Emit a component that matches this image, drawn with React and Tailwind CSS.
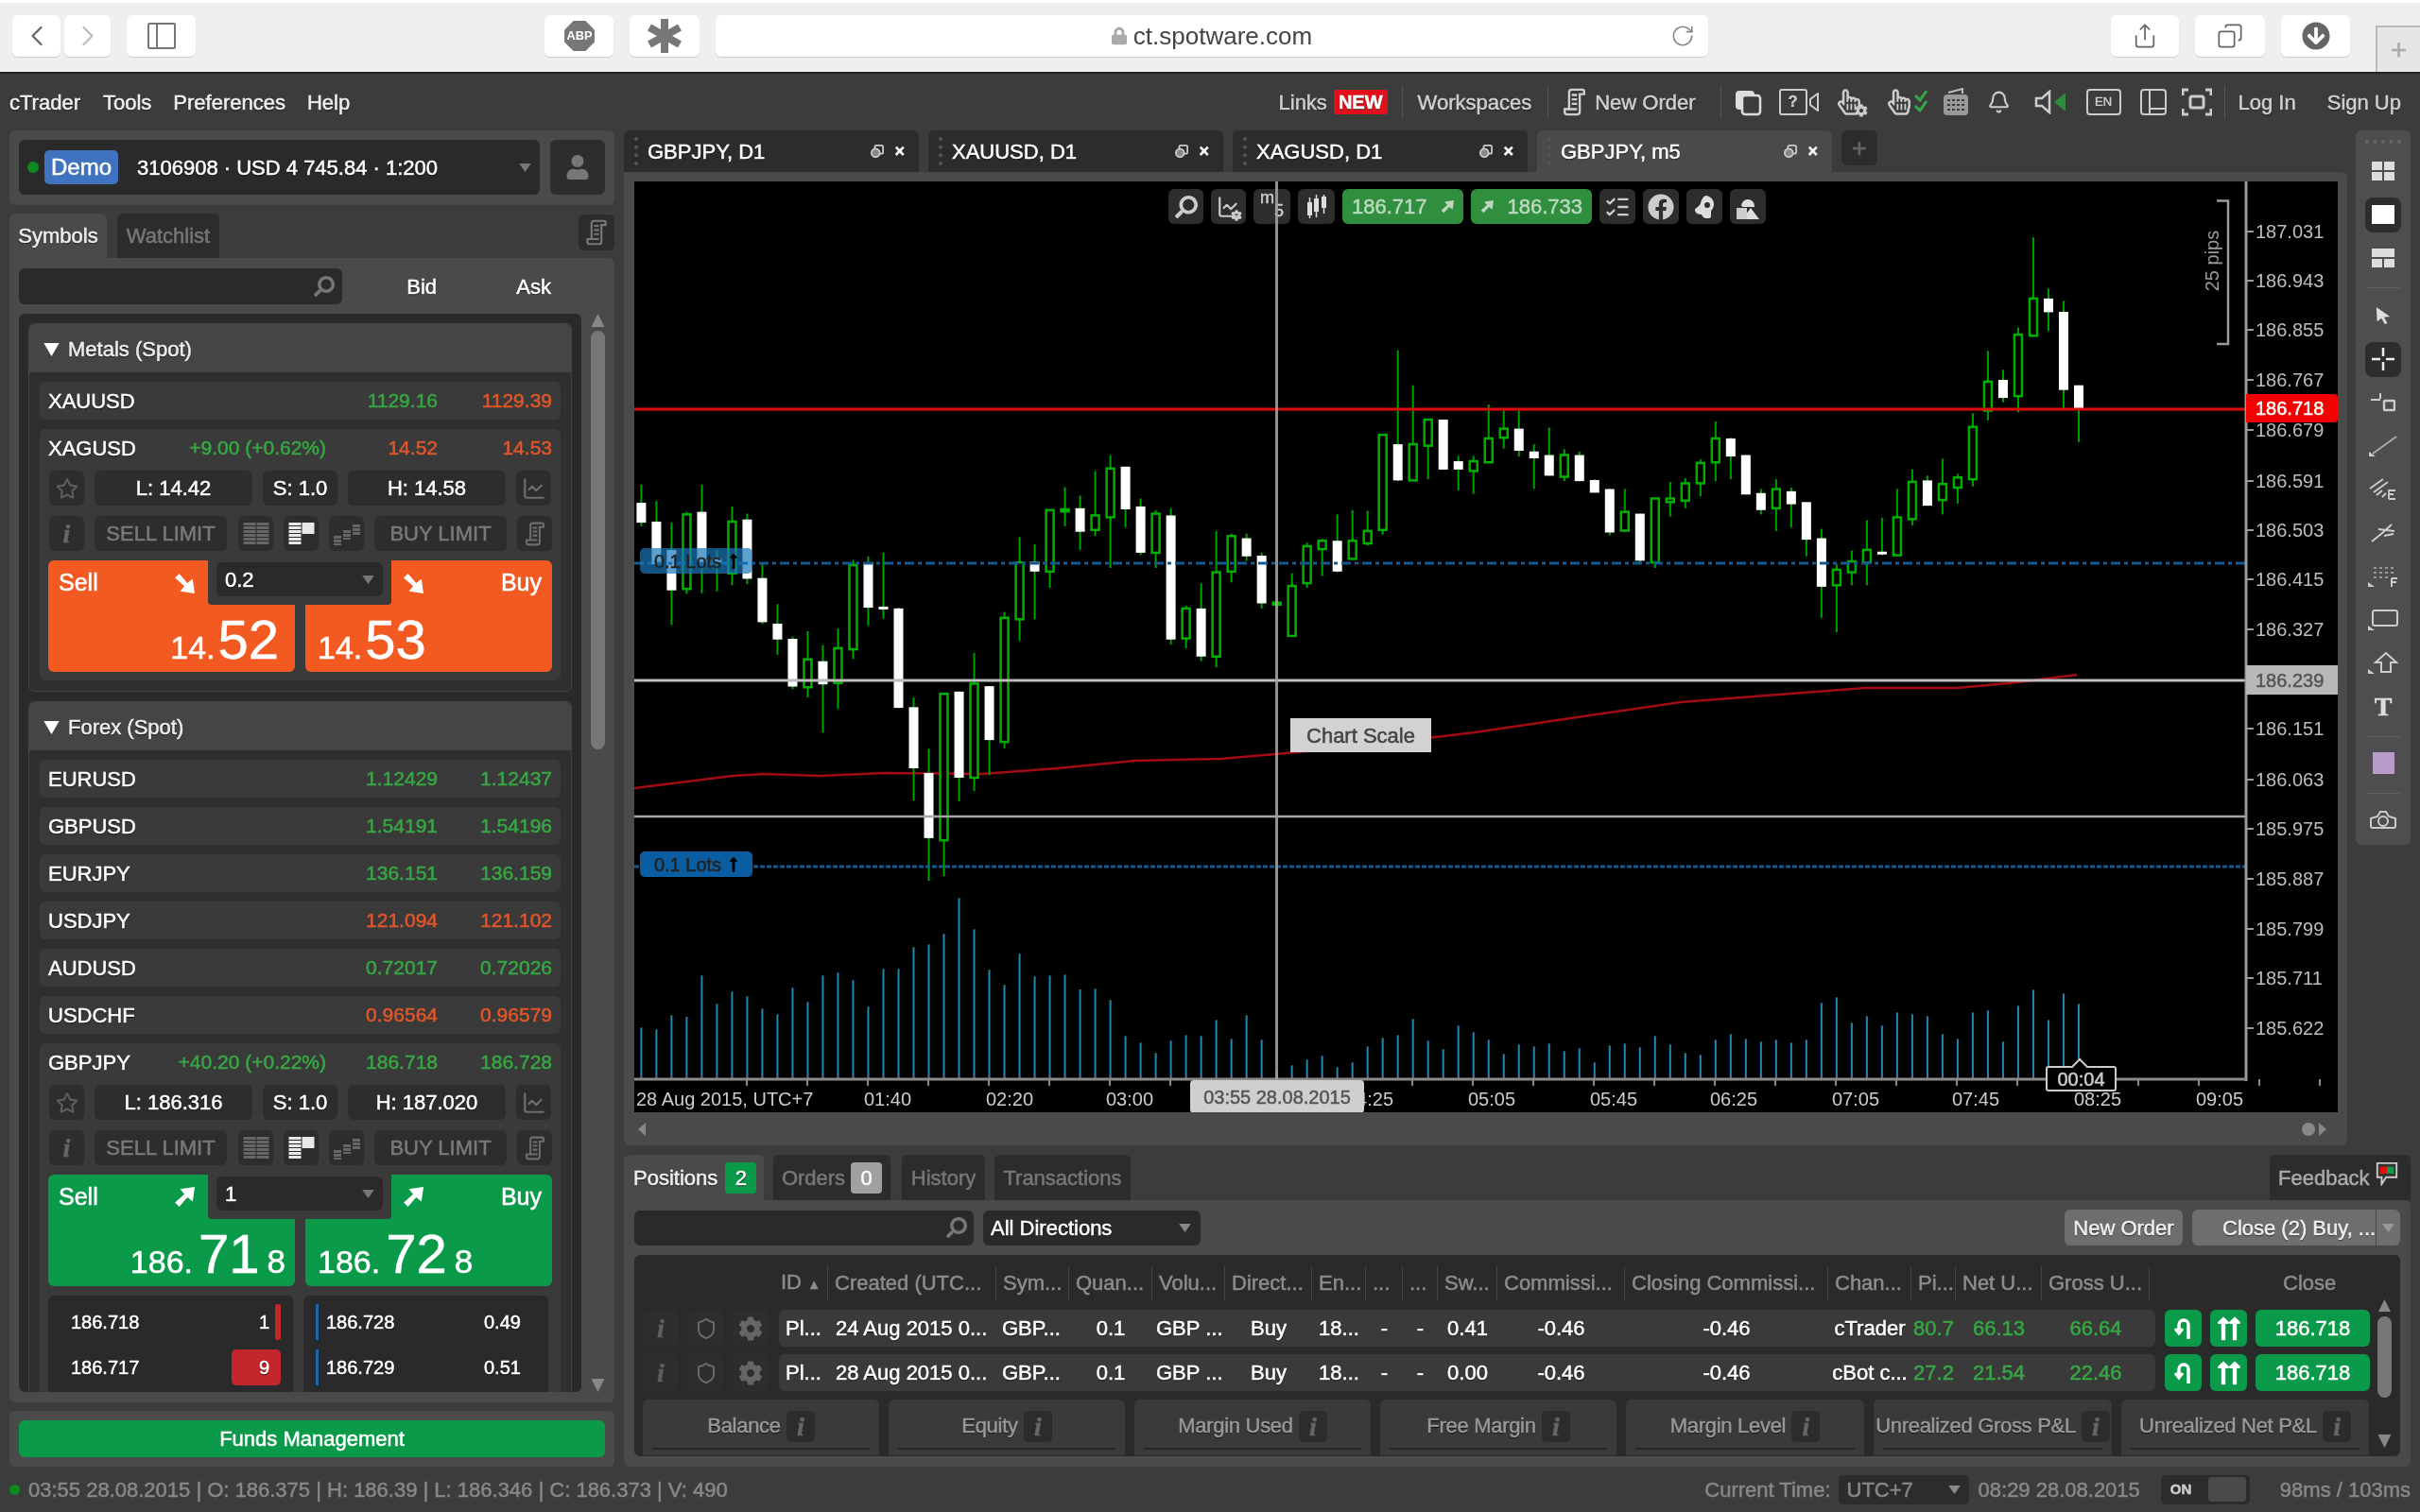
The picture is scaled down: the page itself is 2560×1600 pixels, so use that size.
import React from "react";
import {
  ChevronLeft, ChevronRight, RotateCw, Share, Copy, Bell, ListChecks, ChartLine, Shield,
} from "lucide-react";
import {
  FaLock, FaSearch, FaUser, FaArrowCircleDown, FaRegStar, FaCog,
  FaRegHandPointer, FaFacebook, FaLongArrowAltUp,
} from "react-icons/fa";

// [high, body top, body bottom, low, white?] read off the chart, in crop units
const CANDLES = [
  [870,920,975,985,1],[915,972,1090,1095,1],[975,1050,1162,1258,1],[945,952,1158,1172,0],[870,945,1090,1170,1],
  [1050,1075,1085,1165,1],[930,972,1115,1148,0],[950,966,1130,1145,1],[1088,1128,1250,1255,1],[1200,1254,1298,1340,1],
  [1290,1296,1428,1435,1],[1275,1353,1430,1458,0],[1313,1358,1422,1555,1],[1268,1322,1418,1490,0],[1078,1092,1325,1352,0],
  [1068,1085,1210,1260,1],[1058,1207,1214,1240,1],[1210,1212,1487,1487,1],[1458,1485,1654,1743,1],[1600,1667,1847,1965,1],
  [1448,1448,1853,1952,0],[1442,1442,1680,1745,1],[1335,1420,1680,1717,0],[1427,1427,1576,1672,1],[1222,1238,1581,1599,0],
  [1015,1085,1242,1302,0],[1035,1083,1110,1242,1],[940,940,1110,1155,0],[877,938,944,985,0],[900,935,1000,1050,1],
  [832,955,995,1012,0],[788,825,960,1100,0],[820,820,938,988,1],[908,930,1058,1065,1],[940,950,1058,1100,0],
  [935,955,1298,1312,1],[1205,1212,1295,1322,0],[1143,1212,1345,1358,1],[998,1112,1345,1375,0],[1005,1012,1110,1140,0],
  [1005,1018,1068,1080,1],[1058,1066,1198,1212,1],[1194,1196,1198,1200,0],[1115,1150,1288,1288,0],[1030,1040,1142,1155,0],
  [1020,1025,1048,1122,0],[952,1025,1110,1112,1],[940,1025,1075,1078,0],[942,998,1032,1038,0],[730,732,995,1008,0],
  [498,758,858,860,1],[595,758,858,860,0],[690,690,762,855,0],[690,690,828,828,1],[790,805,828,885,1],
  [790,805,832,895,0],[648,742,808,808,0],[665,715,740,770,0],[665,715,776,792,1],[758,778,797,882,1],
  [712,788,845,845,1],[772,788,848,860,0],[778,788,860,860,1],[855,857,892,892,1],[880,882,1002,1010,1],
  [882,945,997,1000,0],[950,950,1080,1085,1],[908,908,1085,1100,0],[862,908,918,958,0],[852,866,914,935,0],
  [800,810,866,902,0],[695,742,808,860,0],[740,742,792,855,1],[788,788,897,897,1],[882,893,940,952,1],
  [855,882,935,998,0],[878,888,924,988,1],[918,918,1022,1068,1],[992,1018,1152,1238,1],[1090,1105,1148,1278,0],
  [1052,1082,1112,1148,0],[968,1050,1085,1148,0],[962,1055,1062,1065,1],[882,960,1065,1065,0],[828,862,965,982,0],
  [845,858,928,928,1],[798,868,912,952,0],[840,850,878,922,0],[672,710,855,875,0],[500,585,665,692,0],
  [552,580,630,642,1],[435,455,625,670,0],[186,355,458,458,0],[328,355,393,445,1],[362,392,608,660,1],[595,595,660,752,1],
];

const VOLUMES = [
  922,928,883,888,757,847,808,823,862,880,796,841,757,748,772,856,736,736,667,658,625,511,610,739,787,688,760,757,754,801,
  799,835,949,970,1003,964,946,949,898,958,883,961,1060,1042,1024,1012,1048,1033,982,955,946,895,964,991,916,937,961,1006,
  976,982,973,997,988,1033,979,973,985,949,976,1003,1009,961,943,958,967,961,970,961,844,826,907,886,916,874,880,886,943,
  958,874,868,967,853,802,898,814,847,
];

const MA_LINE = "671,834 775,821 809,819 867,821 936,818 1039,819 1119,813 1200,805 1291,803 1349,798 1383,795 1518,780 1560,775 1675,758 1778,743 1881,735 1973,728 2071,728 2134,722 2197,714";
const PRICES = [
  ["187.031",245],["186.943",297],["186.855",349],["186.767",402],["186.679",455],["186.591",509],["186.503",561],["186.415",613],["186.327",666],
  ["186.151",771],["186.063",825],["185.975",877],["185.887",930],["185.799",983],["185.711",1035],["185.622",1088],
];
const TIMES = [["01:40",939],["02:20",1068],["03:00",1195],["04:25",1449],["05:05",1578],["05:45",1707],["06:25",1834],["07:05",1963],["07:45",2090],["08:25",2219],["09:05",2348]];
const FOREX = [
  ["EURUSD","1.12429","1.12437",true],["GBPUSD","1.54191","1.54196",true],["EURJPY","136.151","136.159",true],
  ["USDJPY","121.094","121.102",false],["AUDUSD","0.72017","0.72026",true],["USDCHF","0.96564","0.96579",false],
];

const sx = (i) => 678.4 + i * 16.006;
const sy = (v) => 180 + v / 2.613;

const shadow = "[text-shadow:0_1px_1px_#000]";
const box = "flex items-center justify-center rounded-[6px] bg-[#2d2d2d]";
const tableCols = "grid grid-cols-[52px_178px_77px_88px_77px_92px_57px_39px_37px_63px_135px_215px_88px_47px_91px_114px]";

function Caret({ className = "" }) {
  return (
    <svg viewBox="0 0 14 10" className={`h-[9px] w-[13px] ${className}`}>
      <polygon points="0,0 14,0 7,10" fill="currentColor" />
    </svg>
  );
}

function InfoMark({ className = "text-[#777]" }) {
  return <span className={`font-['Liberation_Serif',serif] text-[28px] font-bold italic leading-none ${className}`}>i</span>;
}

function DocIcon({ className = "h-[28px] w-[22px]" }) {
  return (
    <svg viewBox="0 0 24 32" fill="none" stroke="currentColor" strokeWidth="2.5" className={className}>
      <path d="M6 24V5a3 3 0 0 1 3-3h12a2 2 0 0 1 2 2v3h-5v20a3 3 0 0 1-3 3H4a3 3 0 0 1-3-3v-3h14" />
      <path d="M9 8h6M9 13h6M9 18h6" />
    </svg>
  );
}

function DiagArrow({ up, className = "h-[22px] w-[22px] text-white" }) {
  return (
    <svg viewBox="0 0 20 20" className={`${className} ${up ? "" : "rotate-90"}`}>
      <path d="M20 0 L18 14 L13 10 L5 19 L1 15 L10 7 L6 2 Z" fill="currentColor" />
    </svg>
  );
}

function PopOut() {
  return (
    <svg viewBox="0 0 16 16" fill="none" stroke="#ccc" strokeWidth="2" className="h-[14px] w-[14px]">
      <rect x="5" y="1" width="10" height="10" rx="2" />
      <circle cx="6" cy="10" r="5" fill="#888" />
    </svg>
  );
}

function ChartTab({ label, active }) {
  return (
    <div className={`flex h-[44px] w-[312px] items-center rounded-t-[6px] pl-[11px] ${active ? "bg-[#4a4a4a]" : "bg-[#2c2c2c]"}`}>
      <div className="h-[30px] w-[4px] border-l-[4px] border-dotted border-[#555]" />
      <span className={`ml-[10px] flex-1 text-[22px] text-white ${shadow}`}>{label}</span>
      <PopOut />
      <span className="ml-[11px] mr-[15px] text-[18px] font-bold leading-none text-white">×</span>
    </div>
  );
}

function Row({ symbol, bid, ask, up, askUp = up }) {
  return (
    <div className="flex h-[40px] items-center rounded-[6px] bg-[#3a3a3a] pl-[9px] pr-[9px]">
      <span className={`flex-1 text-[22px] text-white ${shadow}`}>{symbol}</span>
      <span className={`w-[118px] text-right text-[21px] ${up ? "text-[#36a843]" : "text-[#e2562a]"}`}>{bid}</span>
      <span className={`w-[121px] text-right text-[21px] ${askUp ? "text-[#36a843]" : "text-[#e2562a]"}`}>{ask}</span>
    </div>
  );
}

function TradeButton({ side, up, big }) {
  const bg = up ? "bg-[#0a9a49]" : "bg-[#f25a22]";
  const sell = side === "Sell";
  const [head, mid, tail] = big;
  return (
    <div className={`relative h-[118px] w-[261px] rounded-[6px] ${bg}`}>
      <div className={`flex h-[47px] items-center px-[11px] ${sell ? "justify-start" : "justify-between pl-[103px]"}`}>
        {sell ? <span className="text-[25px] text-white">Sell</span> : <DiagArrow up={up} />}
        {sell ? <span className="ml-[80px]"><DiagArrow up={up} /></span> : <span className="text-[25px] text-white">Buy</span>}
      </div>
      <div className={`absolute bottom-[5px] flex items-baseline text-white ${sell ? "right-[10px]" : "left-[13px]"}`}>
        <span className="text-[34px] leading-none">{head}</span>
        <span className={`text-[58px] leading-none ${tail ? "ml-[6px]" : "ml-[3px]"}`}>{mid}</span>
        {tail ? <span className="ml-[8px] text-[35px] leading-none">{tail}</span> : <span className="w-[7px]" />}
      </div>
    </div>
  );
}

function BookIcon({ kind }) {
  if (kind === "steps") {
    return (
      <svg viewBox="0 0 28 24" className="h-[24px] w-[28px]" stroke="#666" strokeWidth="8" strokeDasharray="3 1">
        <line x1="4" x2="4" y1="14" y2="24" />
        <line x1="14" x2="14" y1="8" y2="18" />
        <line x1="24" x2="24" y1="2" y2="14" />
      </svg>
    );
  }
  const c = kind === "mid" ? "#e8e8e8" : "#666";
  return (
    <svg viewBox="0 0 28 24" className="h-[24px] w-[28px]" stroke={c} strokeWidth="13" strokeDasharray="3 1">
      <line x1="7" x2="7" y1="0" y2="24" />
      <line x1="21" x2="21" y1="0" y2={kind === "mid" ? 12 : 24} strokeDasharray={kind === "mid" ? "none" : "3 1"} />
    </svg>
  );
}

function ExpandedRow({ symbol, change, bid, ask, up, low, high, qty, sellBig, buyBig, depth }) {
  const tone = up ? "text-[#36a843]" : "text-[#e2562a]";
  return (
    <div className={`rounded-[6px] bg-[#3a3a3a] pl-[9px] pr-[9px] ${depth ? "h-[420px]" : "h-[266px]"}`}>
      <div className="flex h-[40px] items-center">
        <span className={`flex-1 text-[22px] text-white ${shadow}`}>{symbol}</span>
        <span className="text-[21px] text-[#36a843]">{change}</span>
        <span className={`w-[118px] text-right text-[21px] ${tone}`}>{bid}</span>
        <span className={`w-[121px] text-right text-[21px] ${tone}`}>{ask}</span>
      </div>
      <div className={`ml-[1px] mt-[4px] flex h-[37px] gap-[11px] text-[22px] text-white ${shadow}`}>
        <div className={`${box} w-[37px] text-[#5e5e5e]`}><FaRegStar className="h-[24px] w-[24px]" /></div>
        <div className={`${box} w-[167px]`}>L: {low}</div>
        <div className={`${box} w-[79px]`}>S: 1.0</div>
        <div className={`${box} w-[167px]`}>H: {high}</div>
        <div className={`${box} w-[37px] text-[#6e6e6e]`}><ChartLine className="h-[26px] w-[26px]" /></div>
      </div>
      <div className="ml-[1px] mt-[11px] flex h-[37px] gap-[11px] text-[22px] text-[#7a7a7a]">
        <div className={`${box} w-[37px]`}><InfoMark className="text-[#666]" /></div>
        <div className={`${box} w-[140px]`}>SELL LIMIT</div>
        <div className={`${box} ml-[1px] w-[37px]`}><BookIcon kind="grid" /></div>
        <div className={`${box} w-[37px]`}><BookIcon kind="mid" /></div>
        <div className={`${box} w-[37px]`}><BookIcon kind="steps" /></div>
        <div className={`${box} w-[140px]`}>BUY LIMIT</div>
        <div className={`${box} w-[37px]`}><DocIcon className="h-[26px] w-[20px] text-[#6e6e6e]" /></div>
      </div>
      <div className="relative mt-[10px] flex gap-[11px]">
        <TradeButton side="Sell" up={up} big={sellBig} />
        <TradeButton side="Buy" up={up} big={buyBig} />
        <div className="absolute left-[169px] top-0 flex h-[47px] w-[194px] rounded-b-[4px] bg-[#3a3a3a] px-[9px] pt-[2px]">
          <div className="flex h-[36px] flex-1 items-center justify-between rounded-[6px] bg-[#2a2a2a] pl-[9px] pr-[9px]">
            <span className={`text-[22px] text-white ${shadow}`}>{qty}</span>
            <Caret className="text-[#777]" />
          </div>
        </div>
      </div>
      {depth && (
        <div className={`mt-[10px] flex gap-[11px] text-[20px] text-white ${shadow}`}>
          <div className="h-[220px] w-[259px] rounded-[6px] bg-[#2a2a2a] pr-[13px] pt-[4px]">
            <div className="flex h-[48px] items-center pl-[24px]">
              <span className="flex-1">186.718</span>
              <span>1</span>
              <div className="ml-[6px] h-[38px] w-[6px] rounded-[2px] bg-[#c3262c]" />
            </div>
            <div className="flex h-[48px] items-center pl-[24px]">
              <span className="flex-1">186.717</span>
              <div className="flex h-[38px] w-[52px] items-center justify-end rounded-[5px] bg-[#c3262c] pr-[12px]">9</div>
            </div>
          </div>
          <div className="h-[220px] w-[259px] rounded-[6px] bg-[#2a2a2a] pl-[13px] pt-[4px]">
            <div className="flex h-[48px] items-center">
              <div className="h-[38px] w-[3px] bg-[#1a66b0]" />
              <span className="ml-[8px] flex-1">186.728</span>
              <span className="w-[68px]">0.49</span>
            </div>
            <div className="flex h-[48px] items-center">
              <div className="h-[38px] w-[3px] bg-[#1a66b0]" />
              <span className="ml-[8px] flex-1">186.729</span>
              <span className="w-[68px]">0.51</span>
            </div>
          </div>
        </div>
      )}
    </div>
  );
}

function Group({ title, children }) {
  return (
    <div className="rounded-[6px] border border-[#444] bg-[#2f2f2f]">
      <div className="flex h-[51px] items-center rounded-t-[6px] bg-[#454545] pl-[15px] pt-[2px]">
        <svg viewBox="0 0 14 12" className="h-[14px] w-[17px]"><polygon points="0,0 14,0 7,12" fill="#fff" /></svg>
        <span className={`ml-[9px] text-[22px] text-[#eee] ${shadow}`}>{title}</span>
      </div>
      <div className="flex flex-col gap-[10px] px-[11px] pb-[11px] pt-[10px]">{children}</div>
    </div>
  );
}

function ChartArea() {
  return (
    <svg viewBox="671 192 1802 985" width="1802" height="985" className="block">
      {VOLUMES.map((v, i) => (
        <line key={i} x1={sx(i)} x2={sx(i)} y1={780 + v / 3} y2={1141} stroke="#2a85b0" strokeWidth="2" />
      ))}
      <polyline points={MA_LINE} fill="none" stroke="#a30a14" strokeWidth="2.5" />
      {CANDLES.map(([hi, top, bot, lo, white], i) => {
        const x = sx(i);
        return (
          <g key={i}>
            <line x1={x} x2={x} y1={sy(hi)} y2={sy(lo)} stroke="#00a000" strokeWidth="2" />
            {white ? (
              <rect x={x - 5} y={sy(top)} width="10" height={Math.max(sy(bot) - sy(top), 3)} fill="#fff" />
            ) : (
              <rect x={x - 4} y={sy(top)} width="8" height={Math.max(sy(bot) - sy(top), 2)} fill="#000" stroke="#00b000" strokeWidth="2.5" />
            )}
          </g>
        );
      })}
      <line x1="671" x2="2376" y1="433" y2="433" stroke="#e00d0d" strokeWidth="3" />
      <line x1="671" x2="2376" y1="720" y2="720" stroke="#bdbdbd" strokeWidth="3" />
      <line x1="671" x2="2376" y1="864" y2="864" stroke="#a8a8a8" strokeWidth="2.5" />
      <line x1="671" x2="2376" y1="596" y2="596" stroke="#14588f" strokeWidth="3" strokeDasharray="10 4 4 4" />
      <line x1="671" x2="2376" y1="917" y2="917" stroke="#14588f" strokeWidth="3" strokeDasharray="5 2" />

      <line x1="2376" x2="2376" y1="192" y2="1144" stroke="#9a9a9a" strokeWidth="3" />
      <line x1="671" x2="2376" y1="1142" y2="1142" stroke="#8a8a8a" strokeWidth="3" />
      {PRICES.map(([p, y]) => (
        <g key={p}>
          <line x1="2376" x2="2384" y1={y} y2={y} stroke="#9a9a9a" strokeWidth="2" />
          <text x="2386" y={y + 7} fontSize="20" fill="#bdbdbd">{p}</text>
        </g>
      ))}
      {Array.from({ length: 27 }, (_, i) => (
        <line key={i} x1={790 + i * 64} x2={790 + i * 64} y1="1142" y2="1149" stroke="#8a8a8a" strokeWidth="2" />
      ))}
      <text x="673" y="1170" fontSize="20" fill="#ccc">28 Aug 2015, UTC+7</text>
      {TIMES.map(([t, x]) => (
        <text key={t} x={x} y="1170" fontSize="20" fill="#ccc" textAnchor="middle">{t}</text>
      ))}
      <path d="M2345 212.5h12v151.5h-12" fill="none" stroke="#9a9a9a" strokeWidth="2.5" />
      <text x="2354" y="283" fontSize="20" fill="#9a9a9a" textAnchor="middle" transform="rotate(-90 2347 283)">25 pips</text>
    </svg>
  );
}

function Hand({ extra }) {
  return (
    <div className="relative flex w-full items-center text-[#ccc]">
      <FaRegHandPointer className="h-[28px] w-[24px]" />
      {extra}
    </div>
  );
}

function MenuIcons() {
  return (
    <>
      <div className="ml-[14px] h-[30px] w-[29px] text-[#ddd]">
        <svg viewBox="0 0 29 30" fill="none" className="h-full w-full">
          <rect x="1" y="3" width="20" height="20" rx="4" fill="#ddd" />
          <rect x="8" y="8" width="19" height="20" rx="3" fill="#3c3c3c" stroke="#ddd" strokeWidth="2.5" />
        </svg>
      </div>
      <div className="ml-[18px] flex h-[30px] w-[42px] items-center text-[#ccc]">
        <div className="flex h-[28px] w-[30px] items-center justify-center rounded-[3px] border-2 border-[#ccc] text-[16px] font-bold leading-none">?</div>
        <svg viewBox="0 0 10 20" className="ml-[2px] h-[20px] w-[10px]"><path d="M9 1 1 7v6l8 6Z" fill="none" stroke="#ccc" strokeWidth="2" /></svg>
      </div>
      <div className="ml-[20px] w-[30px]">
        <Hand extra={<FaCog className="absolute -bottom-[2px] right-[-2px] h-[14px] w-[14px] text-[#ccc]" />} />
      </div>
      <div className="ml-[23px] w-[45px]">
        <Hand extra={
          <svg viewBox="0 0 16 26" fill="none" stroke="#36a843" strokeWidth="3" className="ml-[3px] h-[26px] w-[16px]">
            <path d="M2 6l5 5 7-10M2 17l5 5 7-10" />
          </svg>
        } />
      </div>
      <div className="ml-[12px] h-[30px] w-[30px]">
        <svg viewBox="0 0 30 30" className="h-full w-full">
          <path d="M7 5 22 1v5" fill="none" stroke="#bbb" strokeWidth="2" />
          <rect x="2" y="7" width="26" height="22" rx="4" fill="#999" />
          <path d="M6 13h18M6 18h18M6 23h18" stroke="#3c3c3c" strokeWidth="2" strokeDasharray="3 2" />
        </svg>
      </div>
      <Bell className="ml-[18px] h-[30px] w-[25px] text-[#ccc]" strokeWidth={2} />
      <div className="ml-[25px] h-[26px] w-[35px]">
        <svg viewBox="0 0 35 26" className="h-full w-full">
          <path d="M2 9h6l8-7v22l-8-7H2Z" fill="none" stroke="#ccc" strokeWidth="2.5" />
          <path d="M33 3v20L21 13Z" fill="#2f8a3c" />
        </svg>
      </div>
      <div className="ml-[20px] flex h-[28px] w-[37px] items-center justify-center rounded-[4px] border-2 border-[#ccc] text-[13px] text-[#ccc]">EN</div>
      <div className="ml-[20px] flex h-[28px] w-[28px] rounded-[4px] border-2 border-[#ccc]">
        <div className="w-[9px] border-r-2 border-[#ccc]" />
        <div className="mt-auto h-[6px] flex-1 border-t-2 border-[#ccc]" />
      </div>
      <div className="ml-[16px] h-[30px] w-[32px]">
        <svg viewBox="0 0 32 30" fill="none" stroke="#ccc" strokeWidth="3" className="h-full w-full">
          <path d="M1 8V2h6M25 2h6v6M31 22v6h-6M7 28H1v-6" />
          <rect x="9" y="9" width="14" height="12" rx="2" />
        </svg>
      </div>
    </>
  );
}

function ToolIcon({ kind }) {
  const st = { fill: "none", stroke: "#ccc", strokeWidth: 2 };
  if (kind === "grid4") return <svg viewBox="0 0 24 20" className="h-[20px] w-[24px]"><path d="M0 0h11v9H0zM13 0h11v9H13zM0 11h11v9H0zM13 11h11v9H13z" fill="#ddd" /></svg>;
  if (kind === "one") return <div className={`${box} h-[37px] w-[38px] rounded-[8px]`}><div className="h-[20px] w-[24px] bg-white" /></div>;
  if (kind === "grid2") return <svg viewBox="0 0 24 20" className="h-[20px] w-[24px]"><path d="M0 0h24v9H0zM0 11h11v9H0zM13 11h11v9H13z" fill="#ddd" /></svg>;
  if (kind === "cursor") return <svg viewBox="0 0 20 22" className="h-[22px] w-[18px]"><path d="M2 1l16 11-7 1 4 7-3 1-4-7-5 4Z" fill="#ddd" /></svg>;
  if (kind === "cross") return <div className={`${box} h-[37px] w-[38px] rounded-[8px]`}><svg viewBox="0 0 24 24" className="h-[24px] w-[24px]"><path d="M0 12h9M15 12h9M12 0v9M12 15v9" stroke="#eee" strokeWidth="2.5" /></svg></div>;
  if (kind === "hline") return <svg viewBox="0 0 26 22" className="h-[22px] w-[26px]" {...st}><path d="M0 8h10M10 1v6" /><rect x="14" y="9" width="11" height="10" rx="1" strokeWidth="2.5" /></svg>;
  if (kind === "trend") return <svg viewBox="0 0 30 22" className="h-[22px] w-[30px]"><path d="M4 19 29 1" stroke="#aaa" strokeWidth="2" /><path d="M0 17l7 5H0Z" fill="#ccc" /></svg>;
  if (kind === "fib") return <svg viewBox="0 0 30 24" className="h-[24px] w-[30px]" {...st}><path d="M1 11 15 1M5 15 20 4M8 18l6-5M14 20l4-4" /><path d="M21 22v-9h7M21 17h5M21 22h7" strokeWidth="1.8" /></svg>;
  if (kind === "fork") return <svg viewBox="0 0 26 20" className="h-[20px] w-[26px]" {...st}><path d="M1 19 11 11M11 11 22 1M8 6 25 8M14 13l10-2" /></svg>;
  if (kind === "dots") return <svg viewBox="0 0 32 24" className="h-[24px] w-[32px]"><path d="M6 3h24M6 8h24M6 13h16" stroke="#999" strokeWidth="2" strokeDasharray="3 3" /><path d="M0 18l7 5H0Z" fill="#ccc" /><path d="M25 14h6M25 14v9M25 18h5" stroke="#ccc" strokeWidth="2" fill="none" /></svg>;
  if (kind === "rect") return <svg viewBox="0 0 32 24" className="h-[24px] w-[32px]"><rect x="5" y="2" width="26" height="16" rx="2" fill="none" stroke="#ccc" strokeWidth="2" /><path d="M0 18l7 5H0Z" fill="#ccc" /></svg>;
  if (kind === "arrow") return <svg viewBox="0 0 32 24" className="h-[24px] w-[32px]"><path d="M19 1 30 11h-6v10H14V11H8Z" fill="none" stroke="#ccc" strokeWidth="2" /><path d="M0 18l7 5H0Z" fill="#ccc" /></svg>;
  if (kind === "text") return <span className="font-['Liberation_Serif',serif] text-[28px] font-bold leading-none text-[#ddd]">T</span>;
  if (kind === "swatch") return <div className="h-[23px] w-[23px] bg-[#b79ccb]" />;
  return <svg viewBox="0 0 28 20" className="h-[20px] w-[28px]" {...st}><path d="M1 17V9l7-2 3-5h6l3 5 7 2v8a2 2 0 0 1-2 2H3a2 2 0 0 1-2-2Z" /><circle cx="14" cy="12" r="5" /></svg>;
}

function RightToolbar() {
  const tool = (k) => (
    <div key={k} className="flex h-[46px] items-center justify-center"><ToolIcon kind={k} /></div>
  );
  const sep = "mx-auto h-[1px] w-[36px] bg-[#606060]";
  return (
    <div className="ml-[9px] h-[756px] w-[58px] rounded-[6px] bg-[#4e4e4e]">
      <div className="mx-auto mt-[10px] h-[5px] w-[38px] border-t-[4px] border-dotted border-[#666]" />
      <div className="mt-[5px]">{["grid4", "one", "grid2"].map(tool)}</div>
      <div className={`mt-[8px] ${sep}`} />
      <div className="mt-[6px]">
        {["cursor", "cross", "hline", "trend", "fib", "fork", "dots", "rect", "arrow", "text"].map(tool)}
      </div>
      <div className={`mt-[8px] ${sep}`} />
      <div className="mt-[4px]">{tool("swatch")}</div>
      <div className={`mt-[9px] ${sep}`} />
      <div className="mt-[4px]">{tool("camera")}</div>
    </div>
  );
}

function Summary({ label, w = "w-[250px]" }) {
  return (
    <div className={`relative flex h-[59px] ${w} justify-center gap-[6px] overflow-hidden rounded-t-[6px] bg-[#3a3a3a] pt-[12px] text-[22px] tracking-[-0.3px] text-[#999]`}>
      <span className={`shrink-0 whitespace-nowrap leading-[31px] ${shadow}`}>{label}</span>
      <span className="flex h-[33px] w-[30px] shrink-0 items-center justify-center rounded-[5px] bg-[#2c2c2c]"><InfoMark className="text-[#666]" /></span>
      <div className="absolute bottom-[6px] left-[10px] right-[10px] h-[2px] bg-[#262626]" />
    </div>
  );
}

function PositionRow({ created, channel, pips, net, gross, swap }) {
  return (
    <div className="flex h-[39px] items-center">
      <div className={`${box} h-full w-[38px]`}><InfoMark className="text-[#5e5e5e]" /></div>
      <div className={`${box} ml-[10px] h-full w-[38px]`}><Shield className="h-[28px] w-[24px] text-[#6a6a6a]" /></div>
      <div className={`${box} ml-[9px] h-full w-[38px]`}><FaCog className="h-[26px] w-[26px] text-[#666]" /></div>
      <div className={`${tableCols} ml-[11px] h-full w-[1456px] items-center rounded-[6px] bg-[#3a3a3a] text-center text-[22px] text-white ${shadow}`}>
        <span className="pl-[7px] text-left">Pl...</span>
        <span className="whitespace-nowrap pl-[8px] text-left">{created}</span>
        <span className="pl-[6px] text-left">GBP...</span>
        <span>0.1</span>
        <span className="whitespace-nowrap pl-[4px] text-left">GBP ...</span>
        <span>Buy</span>
        <span>18...</span>
        <span>-</span>
        <span>-</span>
        <span>{swap}</span>
        <span>-0.46</span>
        <span>-0.46</span>
        <span className="whitespace-nowrap">{channel}</span>
        <span className="text-[#36a843] [text-shadow:none]">{pips}</span>
        <span className="text-[#36a843] [text-shadow:none]">{net}</span>
        <span className="text-[#36a843] [text-shadow:none]">{gross}</span>
      </div>
      <div className="ml-[10px] flex h-full w-[39px] items-center justify-center rounded-[6px] bg-[#0a9a49]">
        <svg viewBox="0 0 20 26" fill="none" stroke="#fff" strokeWidth="3.5" className="h-[26px] w-[20px]">
          <path d="M15 24V9a5 5 0 0 0-10 0v6" />
          <path d="M1 13l4 5 4-5" strokeWidth="3" />
        </svg>
      </div>
      <div className="ml-[9px] flex h-full w-[39px] items-center justify-center gap-[2px] rounded-[6px] bg-[#0a9a49] text-white">
        <FaLongArrowAltUp className="-mx-[2px] h-[28px] w-[14px]" /><FaLongArrowAltUp className="-mx-[2px] h-[28px] w-[14px]" />
      </div>
      <div className="ml-[9px] flex h-full w-[121px] items-center justify-center rounded-[6px] bg-[#0a9a49] text-[22px] text-white">186.718</div>
    </div>
  );
}

export default function App() {
  return (
    <div className="flex h-[1600px] w-[2560px] flex-col overflow-hidden bg-[#3c3c3c] font-['Liberation_Sans',Arial,sans-serif] blur-[0.7px] [-webkit-text-stroke:0.5px]">
      {/* browser chrome */}
      <div className="flex h-[78px] shrink-0 items-start border-b-[2px] border-t-[3px] border-b-[#222] border-t-white bg-[#efefef] pl-[13px] pt-[13px] text-[#666]">
        <div className="flex h-[44px] w-[51px] items-center justify-center rounded-[6px] bg-white shadow-[0_1px_1px_#ccc]"><ChevronLeft className="h-[36px] w-[36px]" strokeWidth={1.5} /></div>
        <div className="ml-[4px] flex h-[44px] w-[49px] items-center justify-center rounded-[6px] bg-white text-[#bbb] shadow-[0_1px_1px_#ccc]"><ChevronRight className="h-[36px] w-[36px]" strokeWidth={1.5} /></div>
        <div className="ml-[17px] flex h-[44px] w-[73px] items-center justify-center rounded-[6px] bg-white shadow-[0_1px_1px_#ccc]">
          <div className="flex h-[28px] w-[30px] rounded-[2px] border-2 border-[#777]">
            <div className="w-[9px] border-r-2 border-[#777]" />
          </div>
        </div>
        <div className="ml-[369px] flex h-[44px] w-[73px] items-center justify-center rounded-[6px] bg-white shadow-[0_1px_1px_#ccc]">
          <svg viewBox="0 0 32 32" className="h-[34px] w-[34px]">
            <polygon points="10,1 22,1 31,10 31,22 22,31 10,31 1,22 1,10" fill="#777" />
            <text x="16" y="20" fontSize="12" fontWeight="bold" fill="#fff" textAnchor="middle">ABP</text>
          </svg>
        </div>
        <div className="ml-[17px] flex h-[44px] w-[74px] items-center justify-center rounded-[6px] bg-white shadow-[0_1px_1px_#ccc]">
          <svg viewBox="0 0 36 36" className="h-[36px] w-[36px]" stroke="#777" strokeWidth="8">
            <path d="M18 0v36M2 9l32 18M34 9 2 27" />
          </svg>
        </div>
        <div className="relative ml-[17px] flex h-[44px] w-[1050px] items-center justify-center rounded-[6px] bg-white shadow-[0_1px_1px_#ccc]">
          <FaLock className="h-[20px] w-[16px] text-[#aaa]" />
          <span className="ml-[7px] text-[26px] text-[#444] [-webkit-text-stroke:0]">ct.spotware.com</span>
          <RotateCw className="absolute right-[14px] h-[26px] w-[26px] text-[#888]" strokeWidth={1.5} />
        </div>
        <div className="ml-[426px] flex h-[44px] w-[72px] items-center justify-center rounded-[6px] bg-white shadow-[0_1px_1px_#ccc]"><Share className="h-[32px] w-[28px]" strokeWidth={1.5} /></div>
        <div className="ml-[17px] flex h-[44px] w-[74px] items-center justify-center rounded-[6px] bg-white shadow-[0_1px_1px_#ccc]"><Copy className="h-[28px] w-[28px] -scale-x-100" strokeWidth={1.5} /></div>
        <div className="ml-[17px] flex h-[44px] w-[73px] items-center justify-center rounded-[6px] bg-white shadow-[0_1px_1px_#ccc]"><FaArrowCircleDown className="h-[30px] w-[30px]" /></div>
        <div className="ml-[27px] flex h-[49px] w-[47px] items-center justify-center self-end border-l-2 border-t-2 border-[#bbb] bg-[#e6e6e6] text-[30px] font-light text-[#aaa]">+</div>
      </div>

      {/* app menu */}
      <div className={`flex h-[60px] shrink-0 items-center pl-[10px] pr-[20px] text-[22px] text-[#f0f0f0] ${shadow}`}>
        <span>cTrader</span>
        <span className="ml-[24px]">Tools</span>
        <span className="ml-[23px]">Preferences</span>
        <span className="ml-[23px]">Help</span>
        <div className="ml-auto flex items-center text-[#d0d0d0]">
          <span>Links</span>
          <span className="ml-[7px] rounded-[3px] bg-[#e0101a] px-[5px] text-[20px] font-bold leading-[26px] text-white">NEW</span>
          <div className="ml-[15px] h-[36px] w-[1px] bg-[#555]" />
          <span className="ml-[16px]">Workspaces</span>
          <div className="ml-[17px] h-[36px] w-[1px] bg-[#555]" />
          <DocIcon className="ml-[14px] h-[30px] w-[27px]" />
          <span className="ml-[8px]">New Order</span>
          <div className="ml-[26px] h-[36px] w-[1px] bg-[#555]" />
          <MenuIcons />
          <div className="ml-[13px] h-[36px] w-[1px] bg-[#555]" />
          <span className="ml-[14px]">Log In</span>
          <span className="ml-[33px]">Sign Up</span>
        </div>
      </div>

      <div className="flex h-[1414px] shrink-0">
        {/* left column */}
        <div className="flex w-[660px] shrink-0 flex-col pl-[10px] pr-[10px]">
          <div className="flex h-[79px] gap-[11px] rounded-[6px] bg-[#4a4a4a] p-[10px]">
            <div className="flex h-[58px] flex-1 items-center rounded-[6px] bg-[#2a2a2a] pl-[9px] pr-[9px]">
              <div className="h-[12px] w-[12px] rounded-full bg-[#0d8a1f]" />
              <span className="ml-[6px] rounded-[5px] bg-[#3f72bf] px-[7px] text-[24px] leading-[36px] text-white">Demo</span>
              <span className={`ml-[20px] flex-1 text-[22px] text-white ${shadow}`}>3106908 · USD 4 745.84 · 1:200</span>
              <Caret className="text-[#777]" />
            </div>
            <div className={`${box} h-[58px] w-[58px] text-[#777]`}><FaUser className="h-[26px] w-[26px]" /></div>
          </div>

          <div className="mt-[9px] flex h-[47px] items-end">
            <div className={`flex h-[47px] w-[103px] items-center justify-center rounded-t-[6px] bg-[#4a4a4a] text-[22px] text-[#eee] ${shadow}`}>Symbols</div>
            <div className="ml-[11px] flex h-[47px] w-[108px] items-center justify-center rounded-t-[6px] bg-[#2c2c2c] text-[22px] text-[#777]">Watchlist</div>
            <div className="mb-[8px] ml-auto flex h-[38px] w-[38px] items-center justify-center rounded-[6px] bg-[#2c2c2c] text-[#777]"><DocIcon className="h-[28px] w-[22px]" /></div>
          </div>

          <div className="flex h-[1211px] flex-col rounded-b-[6px] rounded-tr-[6px] bg-[#4a4a4a] px-[10px] pt-[11px]">
            <div className={`flex h-[38px] items-center text-[22px] text-white ${shadow}`}>
              <div className="flex h-full w-[342px] items-center justify-end rounded-[6px] bg-[#2a2a2a] pr-[8px] text-[#777]"><FaSearch className="h-[22px] w-[22px] -scale-x-100" /></div>
              <span className="w-[100px] text-right">Bid</span>
              <span className="w-[121px] text-right">Ask</span>
            </div>
            <div className="mt-[10px] flex h-[1141px] gap-[10px]">
              <div className="h-full w-[595px] overflow-hidden rounded-[6px] bg-[#2a2a2a] px-[10px] pt-[10px]">
                <Group title="Metals (Spot)">
                  <Row symbol="XAUUSD" bid="1129.16" ask="1129.39" up askUp={false} />
                  <ExpandedRow symbol="XAGUSD" change="+9.00 (+0.62%)" bid="14.52" ask="14.53" low="14.42" high="14.58" qty="0.2" sellBig={["14.", "52"]} buyBig={["14.", "53"]} />
                </Group>
                <div className="h-[10px]" />
                <Group title="Forex (Spot)">
                  {FOREX.map(([s, b, a, u]) => <Row key={s} symbol={s} bid={b} ask={a} up={u} />)}
                  <ExpandedRow symbol="GBPJPY" change="+40.20 (+0.22%)" bid="186.718" ask="186.728" up low="186.316" high="187.020" qty="1" sellBig={["186.", "71", "8"]} buyBig={["186.", "72", "8"]} depth />
                </Group>
              </div>
              <div className="flex h-full w-[15px] flex-col items-center">
                <svg viewBox="0 0 14 14" className="h-[14px] w-[15px]"><polygon points="7,0 14,14 0,14" fill="#888" /></svg>
                <div className="mt-[4px] h-[443px] w-[15px] rounded-full bg-[#777]" />
                <svg viewBox="0 0 14 14" className="mt-auto h-[14px] w-[15px]"><polygon points="0,0 14,0 7,14" fill="#888" /></svg>
              </div>
            </div>
          </div>

          <div className="mt-[9px] h-[59px] rounded-[6px] bg-[#4a4a4a] p-[10px]">
            <div className="flex h-[39px] items-center justify-center rounded-[6px] bg-[#0a9a49] text-[22px] text-white">Funds Management</div>
          </div>
        </div>

        {/* centre and right */}
        <div className="flex flex-1 flex-col">
          <div className="flex">
            <div className="w-[1823px]">
              <div className="flex h-[44px] items-start gap-[10px]">
                <ChartTab label="GBPJPY, D1" />
                <ChartTab label="XAUUSD, D1" />
                <ChartTab label="XAGUSD, D1" />
                <ChartTab label="GBPJPY, m5" active />
                <div className="flex h-[37px] w-[38px] items-center justify-center rounded-[6px] bg-[#2c2c2c] text-[28px] leading-none text-[#666]">+</div>
              </div>
              <div className="h-[1030px] rounded-b-[6px] rounded-tr-[6px] bg-[#4a4a4a] pl-[11px] pt-[10px]">
                <div className="relative h-[985px] w-[1802px] overflow-hidden bg-black">
                  <ChartArea />
                  <div className="absolute left-[565px] top-[8px] flex gap-[8px] text-[#ccc]">
                    <div className={`${box} h-[37px] w-[37px]`}><FaSearch className="h-[24px] w-[24px] -scale-x-100" /></div>
                    <div className={`${box} relative h-[37px] w-[37px]`}>
                      <ChartLine className="h-[26px] w-[26px]" />
                      <FaCog className="absolute bottom-[3px] right-[4px] h-[12px] w-[12px]" />
                    </div>
                    <div className={`${box} h-[37px] w-[39px] items-start text-[18px] leading-none`}>m<span className="mt-[14px]">5</span></div>
                    <div className={`${box} h-[37px] w-[39px]`}>
                      <svg viewBox="0 0 26 26" className="h-[26px] w-[26px]"><path d="M3 8h5v14H3zM10 4h5v14h-5zM18 2h5v12h-5z" fill="#ddd" /><path d="M5.500 3v22M12.500 0v24M20.500 0v20" stroke="#ddd" strokeWidth="1.5" /></svg>
                    </div>
                    <div className="flex h-[37px] w-[128px] items-center justify-between rounded-[6px] bg-[#2f8f3f] px-[10px] text-[22px] text-[#bcd9bf]">186.717<DiagArrow up className="h-[14px] w-[14px] text-[#bcd9bf]" /></div>
                    <div className="flex h-[37px] w-[128px] items-center justify-between rounded-[6px] bg-[#2f8f3f] px-[10px] text-[22px] text-[#bcd9bf]"><DiagArrow up className="h-[14px] w-[14px] text-[#bcd9bf]" />186.733</div>
                    <div className={`${box} h-[37px] w-[38px]`}><ListChecks className="h-[28px] w-[28px]" /></div>
                    <div className={`${box} h-[37px] w-[38px]`}><FaFacebook className="h-[28px] w-[28px]" /></div>
                    <div className={`${box} h-[37px] w-[38px]`}>
                      <svg viewBox="0 0 24 26" className="h-[26px] w-[24px]"><path d="M14 1a9 9 0 0 1 8 9c0 4-2 5-3 8v5c0 2-2 2-4 2-4 0-5-2-6-4-3 0-6-1-7-4s5-4 6-8 3-8 6-8Z" fill="#ddd" /><circle cx="15" cy="11" r="3" fill="#2d2d2d" /></svg>
                    </div>
                    <div className={`${box} h-[37px] w-[38px]`}>
                      <svg viewBox="0 0 24 26" className="h-[26px] w-[24px]"><path d="M5 12a7 7 0 0 1 14 0v1H7Z" fill="#ddd" /><path d="M15 14l9 12H6Z" fill="#ddd" /><rect x="0" y="14" width="11" height="12" fill="#ccc" /></svg>
                    </div>
                  </div>
                  <div className="absolute left-[678px] top-0 h-[950px] w-[3px] bg-[#a0a0a0]/90" />
                  <div className="absolute left-[694px] top-[568px] flex h-[36px] w-[149px] items-center justify-center bg-[#d2d2d2] text-[22px] text-[#444]">Chart Scale</div>
                  <div className="absolute left-[6px] top-[388px] flex h-[27px] w-[119px] items-center justify-center gap-[8px] rounded-[5px] bg-[#1878bc]/70 text-[20px] text-[#222]">0.1 Lots<FaLongArrowAltUp className="h-[18px] w-[10px] text-black" /></div>
                  <div className="absolute left-[6px] top-[709px] flex h-[27px] w-[119px] items-center justify-center gap-[8px] rounded-[5px] bg-[#0a5da0] text-[20px] text-[#222]">0.1 Lots<FaLongArrowAltUp className="h-[18px] w-[10px] text-black" /></div>
                  <div className="absolute left-[1705px] top-[225px] flex h-[30px] w-[97px] items-center rounded-r-[4px] bg-[#f40000] pl-[10px] text-[20px] text-white">186.718</div>
                  <div className="absolute left-[1705px] top-[512px] flex h-[31px] w-[97px] items-center bg-[#b8b8b8] pl-[10px] text-[20px] text-[#555]">186.239</div>
                  <div className="absolute left-[588px] top-[951px] flex h-[35px] w-[184px] items-center justify-center rounded-[4px] bg-[#cfcfcf] text-[20px] text-[#555]">03:55 28.08.2015</div>
                  <div className="absolute left-[1493px] top-[936px] flex h-[27px] w-[75px] items-center justify-center rounded-[3px] border-2 border-[#ccc] bg-black text-[20px] text-[#ccc]">
                    <div className="absolute -top-[8px] left-[28px] h-[12px] w-[12px] rotate-45 border-l-2 border-t-2 border-[#ccc] bg-black" />
                    <span className="relative">00:04</span>
                  </div>
                </div>
                <div className="flex h-[35px] items-center justify-between pl-[4px] pr-[22px] text-[#777]">
                  <svg viewBox="0 0 8 14" className="h-[14px] w-[8px]"><polygon points="8,0 8,14 0,7" fill="#888" /></svg>
                  <div className="flex items-center gap-[4px]">
                    <div className="h-[14px] w-[14px] rounded-full bg-[#888]" />
                    <svg viewBox="0 0 8 14" className="h-[14px] w-[8px]"><polygon points="0,0 0,14 8,7" fill="#888" /></svg>
                  </div>
                </div>
              </div>
            </div>
            <RightToolbar />
          </div>

          {/* positions panel */}
          <div className="mt-[10px] flex h-[48px] items-end text-[22px] text-[#777]">
            <div className={`flex h-[48px] w-[148px] items-center gap-[8px] rounded-t-[6px] bg-[#4a4a4a] pl-[10px] text-[#f0f0f0] ${shadow}`}>
              Positions<span className="flex h-[33px] w-[33px] items-center justify-center rounded-[4px] bg-[#0a9a49] text-white">2</span>
            </div>
            <div className="ml-[10px] flex h-[48px] w-[124px] items-center justify-center gap-[6px] rounded-t-[6px] bg-[#2c2c2c]">
              Orders<span className="flex h-[33px] w-[33px] items-center justify-center rounded-[4px] bg-[#a0a0a0] text-white">0</span>
            </div>
            <div className="ml-[12px] flex h-[48px] w-[88px] items-center justify-center rounded-t-[6px] bg-[#2c2c2c]">History</div>
            <div className="ml-[10px] flex h-[48px] w-[144px] items-center justify-center rounded-t-[6px] bg-[#2c2c2c]">Transactions</div>
            <div className="ml-auto mr-[10px] flex h-[48px] w-[149px] items-center gap-[4px] rounded-t-[6px] bg-[#2c2c2c] pl-[9px] text-[#aaa]">
              Feedback
              <svg viewBox="0 0 28 28" className="mb-[8px] h-[26px] w-[28px]">
                <path d="M3 2h22v16H13l-5 8v-8H3Z" fill="#333" stroke="#ccc" strokeWidth="2" />
                <rect x="6" y="6" width="8" height="8" fill="#e01010" />
                <rect x="14" y="6" width="8" height="8" fill="#0a9a49" />
              </svg>
            </div>
          </div>
          <div className="mr-[10px] h-[282px] rounded-b-[6px] rounded-tr-[6px] bg-[#4a4a4a] px-[11px] pt-[10px]">
            <div className="flex h-[38px] items-center text-[22px]">
              <div className="flex h-[37px] w-[359px] items-center justify-end rounded-[6px] bg-[#2a2a2a] pr-[7px] text-[#777]"><FaSearch className="h-[22px] w-[22px] -scale-x-100" /></div>
              <div className={`ml-[10px] flex h-[37px] w-[230px] items-center justify-between rounded-[6px] bg-[#2a2a2a] pl-[8px] pr-[10px] text-white ${shadow}`}>All Directions<Caret className="text-[#888]" /></div>
              <div className={`ml-auto flex h-[38px] w-[125px] items-center justify-center rounded-[6px] bg-[#6e6e6e] text-[#f0f0f0] ${shadow}`}>New Order</div>
              <div className={`ml-[10px] flex h-[38px] w-[220px] items-center rounded-[6px] bg-[#6e6e6e] pl-[32px] text-[#f0f0f0] ${shadow}`}>
                <span className="flex-1 whitespace-nowrap">Close (2) Buy, ...</span>
                <div className="flex h-full w-[35px] items-center justify-center border-l border-[#4a4a4a]"><Caret className="text-[#999]" /></div>
              </div>
            </div>
            <div className="mt-[10px] flex h-[213px] overflow-hidden rounded-[6px] bg-[#2a2a2a] pl-[9px]">
              <div className="w-[1835px]">
                <div className="flex h-[58px] items-center pl-[144px] text-[22px] text-[#8c8c8c]">
                  <div className={`${tableCols} h-[36px] w-[1456px] items-center whitespace-nowrap`}>
                    <span className="border-r border-[#444] pl-[2px] leading-[36px]">ID <span className="text-[14px]">▲</span></span>
                    {["Created  (UTC...", "Sym...", "Quan...", "Volu...", "Direct...", "En...", "...", "...", "Sw...", "Commissi...", "Closing Commissi...", "Chan...", "Pi...", "Net U...", "Gross U..."].map((h, i) => (
                      <span key={i} className="overflow-hidden border-r border-[#444] pl-[7px] leading-[36px]">{h}</span>
                    ))}
                  </div>
                  <span className="ml-[135px]">Close</span>
                </div>
                <PositionRow created="24 Aug 2015 0..." channel="cTrader" swap="0.41" pips="80.7" net="66.13" gross="66.64" />
                <div className="h-[8px]" />
                <PositionRow created="28 Aug 2015 0..." channel="cBot c..." swap="0.00" pips="27.2" net="21.54" gross="22.46" />
                <div className="mt-[9px] flex gap-[10px]">
                  <Summary label="Balance" />
                  <Summary label="Equity" />
                  <Summary label="Margin Used" />
                  <Summary label="Free Margin" />
                  <Summary label="Margin Level" w="w-[252px]" />
                  <Summary label="Unrealized Gross P&L" w="w-[252px]" />
                  <Summary label="Unrealized Net P&L" w="w-[262px]" />
                </div>
              </div>
              <div className="flex w-[15px] flex-col pt-[47px]">
                <svg viewBox="0 0 14 14" className="h-[13px] w-[15px]"><polygon points="7,0 14,14 0,14" fill="#888" /></svg>
                <div className="mt-[5px] h-[86px] w-[15px] rounded-full bg-[#777]" />
                <svg viewBox="0 0 14 14" className="mt-[39px] h-[14px] w-[15px]"><polygon points="0,0 14,0 7,14" fill="#888" /></svg>
              </div>
            </div>
          </div>
        </div>
      </div>

      {/* status bar */}
      <div className="flex flex-1 items-center pl-[10px] pr-[10px] text-[22px] text-[#888]">
        <div className="h-[11px] w-[11px] rounded-full bg-[#0d8a1f]" />
        <span className="ml-[9px]">03:55 28.08.2015 | O: 186.375 | H: 186.39 | L: 186.346 | C: 186.373 | V: 490</span>
        <span className="ml-auto">Current Time:</span>
        <div className="ml-[8px] flex h-[31px] w-[138px] items-center justify-between rounded-[5px] bg-[#2c2c2c] pl-[9px] pr-[9px]">UTC+7<Caret className="text-[#888]" /></div>
        <span className="ml-[10px]">08:29 28.08.2015</span>
        <div className="ml-[22px] flex h-[31px] w-[94px] items-center rounded-[5px] bg-[#2c2c2c] pl-[10px] pr-[4px]">
          <span className="text-[15px] font-bold text-[#ccc]">ON</span>
          <div className="ml-auto h-[26px] w-[40px] rounded-[4px] bg-[#4a4a4a]" />
        </div>
        <span className="ml-[32px]">98ms / 103ms</span>
      </div>
    </div>
  );
}
